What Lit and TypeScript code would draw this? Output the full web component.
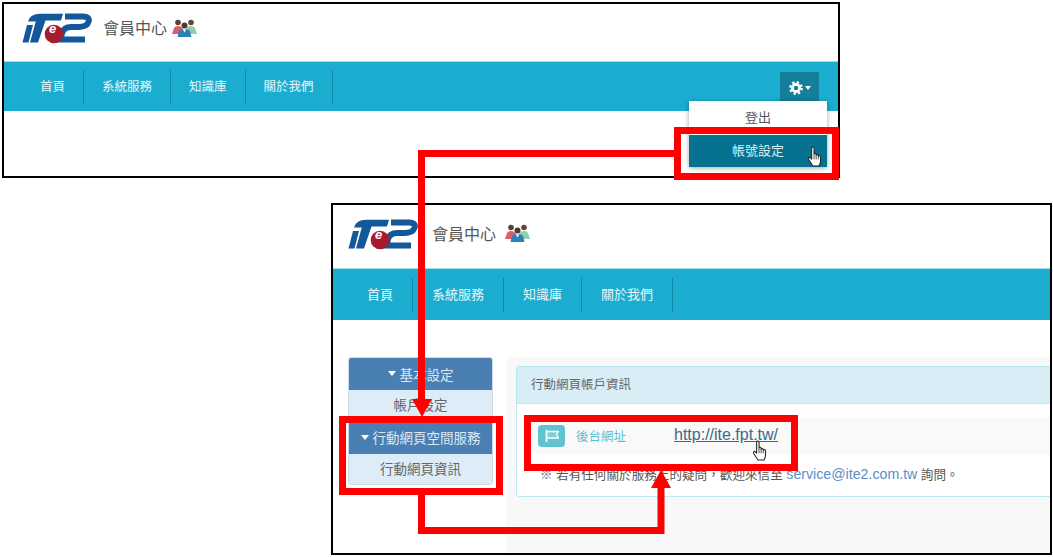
import { LitElement, html, css, svg } from "lit";
import { customElement } from "lit/decorators.js";

const logo = html`<svg class="logo" viewBox="0 0 70 31" width="70" height="31">
  <path fill="#12589a" d="M.5 29.5 L5 12 H11 L6.5 29.5Z"/>
  <path fill="#12589a" d="M6 8.5 Q8 1 18 .8 H41 L39 7.5 H23.5 L16 29.5 H8 L13.5 9.5 L13.8 8.5Z"/>
  <path fill="none" stroke="#12589a" stroke-width="6" d="M43 3.6 H61 Q68 3.6 66.6 8.5 Q65 13.8 57 14 H49 Q42 14 40 20 L38.5 26.6 H63"/>
  <circle cx="32" cy="21" r="9.3" fill="#a51c30"/>
  <text x="30.5" y="20" text-anchor="middle" font-size="13" font-weight="bold" font-style="italic" font-family="Liberation Sans" fill="#fff">e</text>
</svg>`;

const people = html`<svg class="people" viewBox="0 0 25 18" width="25" height="18">
  <circle cx="6" cy="3.5" r="2.8" fill="#5b3f34"/>
  <path fill="#d9606a" d="M0 15 L2 9 Q3 7 6 7 Q9 7 10.5 9 L12 15Z"/>
  <circle cx="19" cy="3.5" r="2.8" fill="#5b4a3a"/>
  <path fill="#92d0a8" d="M13 15 L14.5 9 Q16 7 19 7 Q22 7 23 9 L25 15Z"/>
  <circle cx="12.5" cy="6.5" r="3" fill="#4d3a30"/>
  <path fill="#2f7fb8" d="M5.5 18 L7 12 Q8 10 12.5 10 Q17 10 18 12 L19.5 18Z"/>
  <path fill="#fff" d="M10.8 10.2 H14.2 L12.5 13.5Z"/>
</svg>`;

const hand = html`<svg class="hand" viewBox="0 0 16 23" width="16" height="22">
  <path fill="#fff" stroke="#222" stroke-width="1.1" stroke-linejoin="round"
    d="M4.5 2.2 C4.5 .6 7 .6 7 2.2 V8.5 C7 7.4 9.2 7.4 9.2 8.7 V9.6 C9.2 8.6 11.4 8.6 11.4 9.9 V10.7 C11.4 9.7 13.8 9.8 13.8 11.2 V15.5 C13.8 18 12.9 19.2 12.3 21 H5.8 C5 19 3 17 1.5 14.2 C.6 12.5 2.2 11.3 3.2 12.3 L4.5 13.8 Z"/>
  <path fill="none" stroke="#222" stroke-width=".8" d="M7 9 V14 M9.2 9.5 V14 M11.4 10.5 V14"/>
</svg>`;

const gear = html`<svg viewBox="0 0 14 14" width="14" height="14">
  <circle cx="7" cy="7" r="5" fill="#fff"/>
  <circle cx="7" cy="7" r="5.6" fill="none" stroke="#fff" stroke-width="2.6" stroke-dasharray="2.2 2.2"/>
  <circle cx="7" cy="7" r="2.2" fill="#137f9b"/>
</svg>`;

const flag = html`<svg viewBox="0 0 16 14" width="16" height="14">
  <path fill="none" stroke="#fff" stroke-width="1.8" d="M2.5 1 V13"/>
  <path fill="#fff" fill-opacity=".2" stroke="#fff" stroke-width="1.3" stroke-linejoin="round" d="M3 2.5 H14.5 L12.5 5.5 L14.5 9 H3"/>
</svg>`;

const NAV = ["首頁", "系統服務", "知識庫", "關於我們"];

const arrows = svg`
  <g fill="none" stroke="#ff0000" stroke-width="7">
    <rect x="677.5" y="130.5" width="158" height="46"/>
    <rect x="342.5" y="419.5" width="157" height="72"/>
    <rect x="527.5" y="418.5" width="267" height="49"/>
    <path d="M677 153.5 H421.5 V402"/>
    <path d="M421.5 492 V530.5 H661 V486"/>
  </g>
  <path fill="#ff0000" d="M412 399 H432 L422 417Z"/>
  <path fill="#ff0000" d="M651 488 H671 L661 470Z"/>`;

@customElement("app-root")
export class AppRoot extends LitElement {
  static styles = css`
    :host { display: block; position: relative; width: 1053px; height: 557px; background: #fff; overflow: hidden;
      font-family: "Liberation Sans", "Noto Sans CJK TC", sans-serif; color: #555; }
    .win { position: absolute; box-sizing: border-box; border: 2px solid #000; background: #fff; overflow: hidden; display: flex; flex-direction: column; }
    .w1 { left: 2px; top: 2px; width: 838px; height: 176px; }
    .w2 { left: 331px; top: 203px; width: 721px; height: 352px; }
    .head { display: flex; align-items: center; flex: none; box-sizing: border-box; }
    .w1 .head { height: 57px; padding: 0 0 8px 18px; }
    .w2 .head { height: 63px; padding: 0 0 5px 15px; }
    .logo { flex: none; }
    .title { font-size: 16px; color: #555; margin: 0 0 3px 11px; }
    .w2 .title { margin-left: 14px; }
    .people { margin: 0 0 2px 5px; }
    .w2 .people { margin-left: 9px; }
    .nav { display: flex; align-items: center; background: #1badd0; border-top: 1px solid #a9dcea; box-sizing: border-box; flex: none; }
    .w1 .nav { height: 50px; padding-left: 18px; }
    .w2 .nav { height: 52px; padding-left: 15px; }
    .item { color: #e6f6fa; font-size: 12.5px; line-height: 34px; padding: 0 18px; border-right: 1px solid #1389a8; }
    .w1 .item:last-of-type { padding-right: 19px; }
    .w2 .item { font-size: 13px; padding: 0 19px; }
    .spacer { flex: 1; }
    .gear { width: 39px; height: 33px; margin: 3px 19px 0 0; background: #137f9b; display: flex; align-items: center; justify-content: center; gap: 2px; }
    .caret { width: 0; height: 0; border-left: 3.5px solid transparent; border-right: 3.5px solid transparent; border-top: 4px solid #fff; }
    .menu { position: absolute; left: 689px; top: 101px; width: 138px; background: #fff; box-shadow: 0 1px 5px rgba(0,0,0,.35); font-size: 13px; text-align: center; }
    .menu .off { height: 34px; line-height: 34px; color: #555; }
    .menu .on { height: 32px; line-height: 32px; background: #05728f; color: #d8eef4; }
    .body { flex: 1; display: flex; padding: 37px 0 0 15px; min-height: 0; }
    .side { width: 145px; flex: none; align-self: flex-start; border: 1px solid #c9d9e6; border-radius: 3px; box-sizing: border-box; overflow: hidden; font-size: 13.5px; text-align: center; }
    .sh { background: #4a7fb3; color: #dbe9f5; height: 32px; display: flex; align-items: center; justify-content: center; gap: 4px; padding-bottom: 1px; box-sizing: border-box; }
    .sh .caret { border-left-width: 4px; border-right-width: 4px; border-top-width: 5px; }
    .si { background: #deecf8; color: #666; height: 33px; line-height: 32px; }
    .sh.second { height: 31px; padding-bottom: 3px; }
    .si.second { height: 30px; line-height: 31px; }
    .main { flex: 1; margin-left: 13px; background: #f8f8f8; padding: 9px 0 0 10px; overflow: hidden; }
    .panel { border: 1px solid #bce8f1; border-radius: 3px; background: #fff; width: 560px; box-sizing: border-box; height: 131px; }
    .ph { height: 37px; line-height: 36px; background: #d9edf7; border-bottom: 1px solid #bce8f1; box-sizing: border-box; padding-left: 14px; font-size: 12.5px; color: #666; }
    .pr { background: #f9f9f9; margin: 14px 0 0 14px; height: 36px; display: flex; align-items: flex-start; padding: 7px 0 0 7px; box-sizing: border-box; }
    .ic { width: 27px; height: 22px; background: #5fc3d0; border-radius: 4px; display: flex; align-items: center; justify-content: center; flex: none; }
    .lb { color: #5bc0ce; font-size: 12.5px; margin: 2px 0 0 11px; width: 98px; line-height: 20px; }
    .lk { color: #3c6a8a; font-size: 16px; text-decoration: underline; line-height: 20px; }
    .nt { font-size: 12.6px; color: #555; margin: 11px 0 0 23px; line-height: 18px; white-space: nowrap; }
    .nt a { color: #5b8ec9; font-size: 14.2px; }
    .over { position: absolute; left: 0; top: 0; }
    .cursor { position: absolute; }
    .c1 { left: 807px; top: 146px; }
    .c2 { left: 752px; top: 440px; }
  `;

  private header() {
    return html`<div class="head">${logo}<span class="title">會員中心</span>${people}</div>`;
  }

  render() {
    return html`
      <div class="win w1">
        ${this.header()}
        <div class="nav">
          ${NAV.map((n) => html`<div class="item">${n}</div>`)}
          <div class="spacer"></div>
          <div class="gear">${gear}<span class="caret"></span></div>
        </div>
      </div>
      <div class="win w2">
        ${this.header()}
        <div class="nav">
          ${NAV.map((n) => html`<div class="item">${n}</div>`)}
        </div>
        <div class="body">
          <div class="side">
            <div class="sh"><span class="caret"></span>基本設定</div>
            <div class="si">帳戶設定</div>
            <div class="sh second"><span class="caret"></span>行動網頁空間服務</div>
            <div class="si second">行動網頁資訊</div>
          </div>
          <div class="main">
            <div class="panel">
              <div class="ph">行動網頁帳戶資訊</div>
              <div class="pr">
                <span class="ic">${flag}</span>
                <span class="lb">後台網址</span>
                <span class="lk">http://ite.fpt.tw/</span>
              </div>
              <div class="nt" lang="zh-TW">※ 若有任何關於服務上的疑問&#xFF0C;歡迎來信至 <a>service@ite2.com.tw</a> 詢問。</div>
            </div>
          </div>
        </div>
      </div>
      <div class="menu">
        <div class="off">登出</div>
        <div class="on">帳號設定</div>
      </div>
      <svg class="over" width="1053" height="557" viewBox="0 0 1053 557">${arrows}</svg>
      <div class="cursor c1">${hand}</div>
      <div class="cursor c2">${hand}</div>
    `;
  }
}
